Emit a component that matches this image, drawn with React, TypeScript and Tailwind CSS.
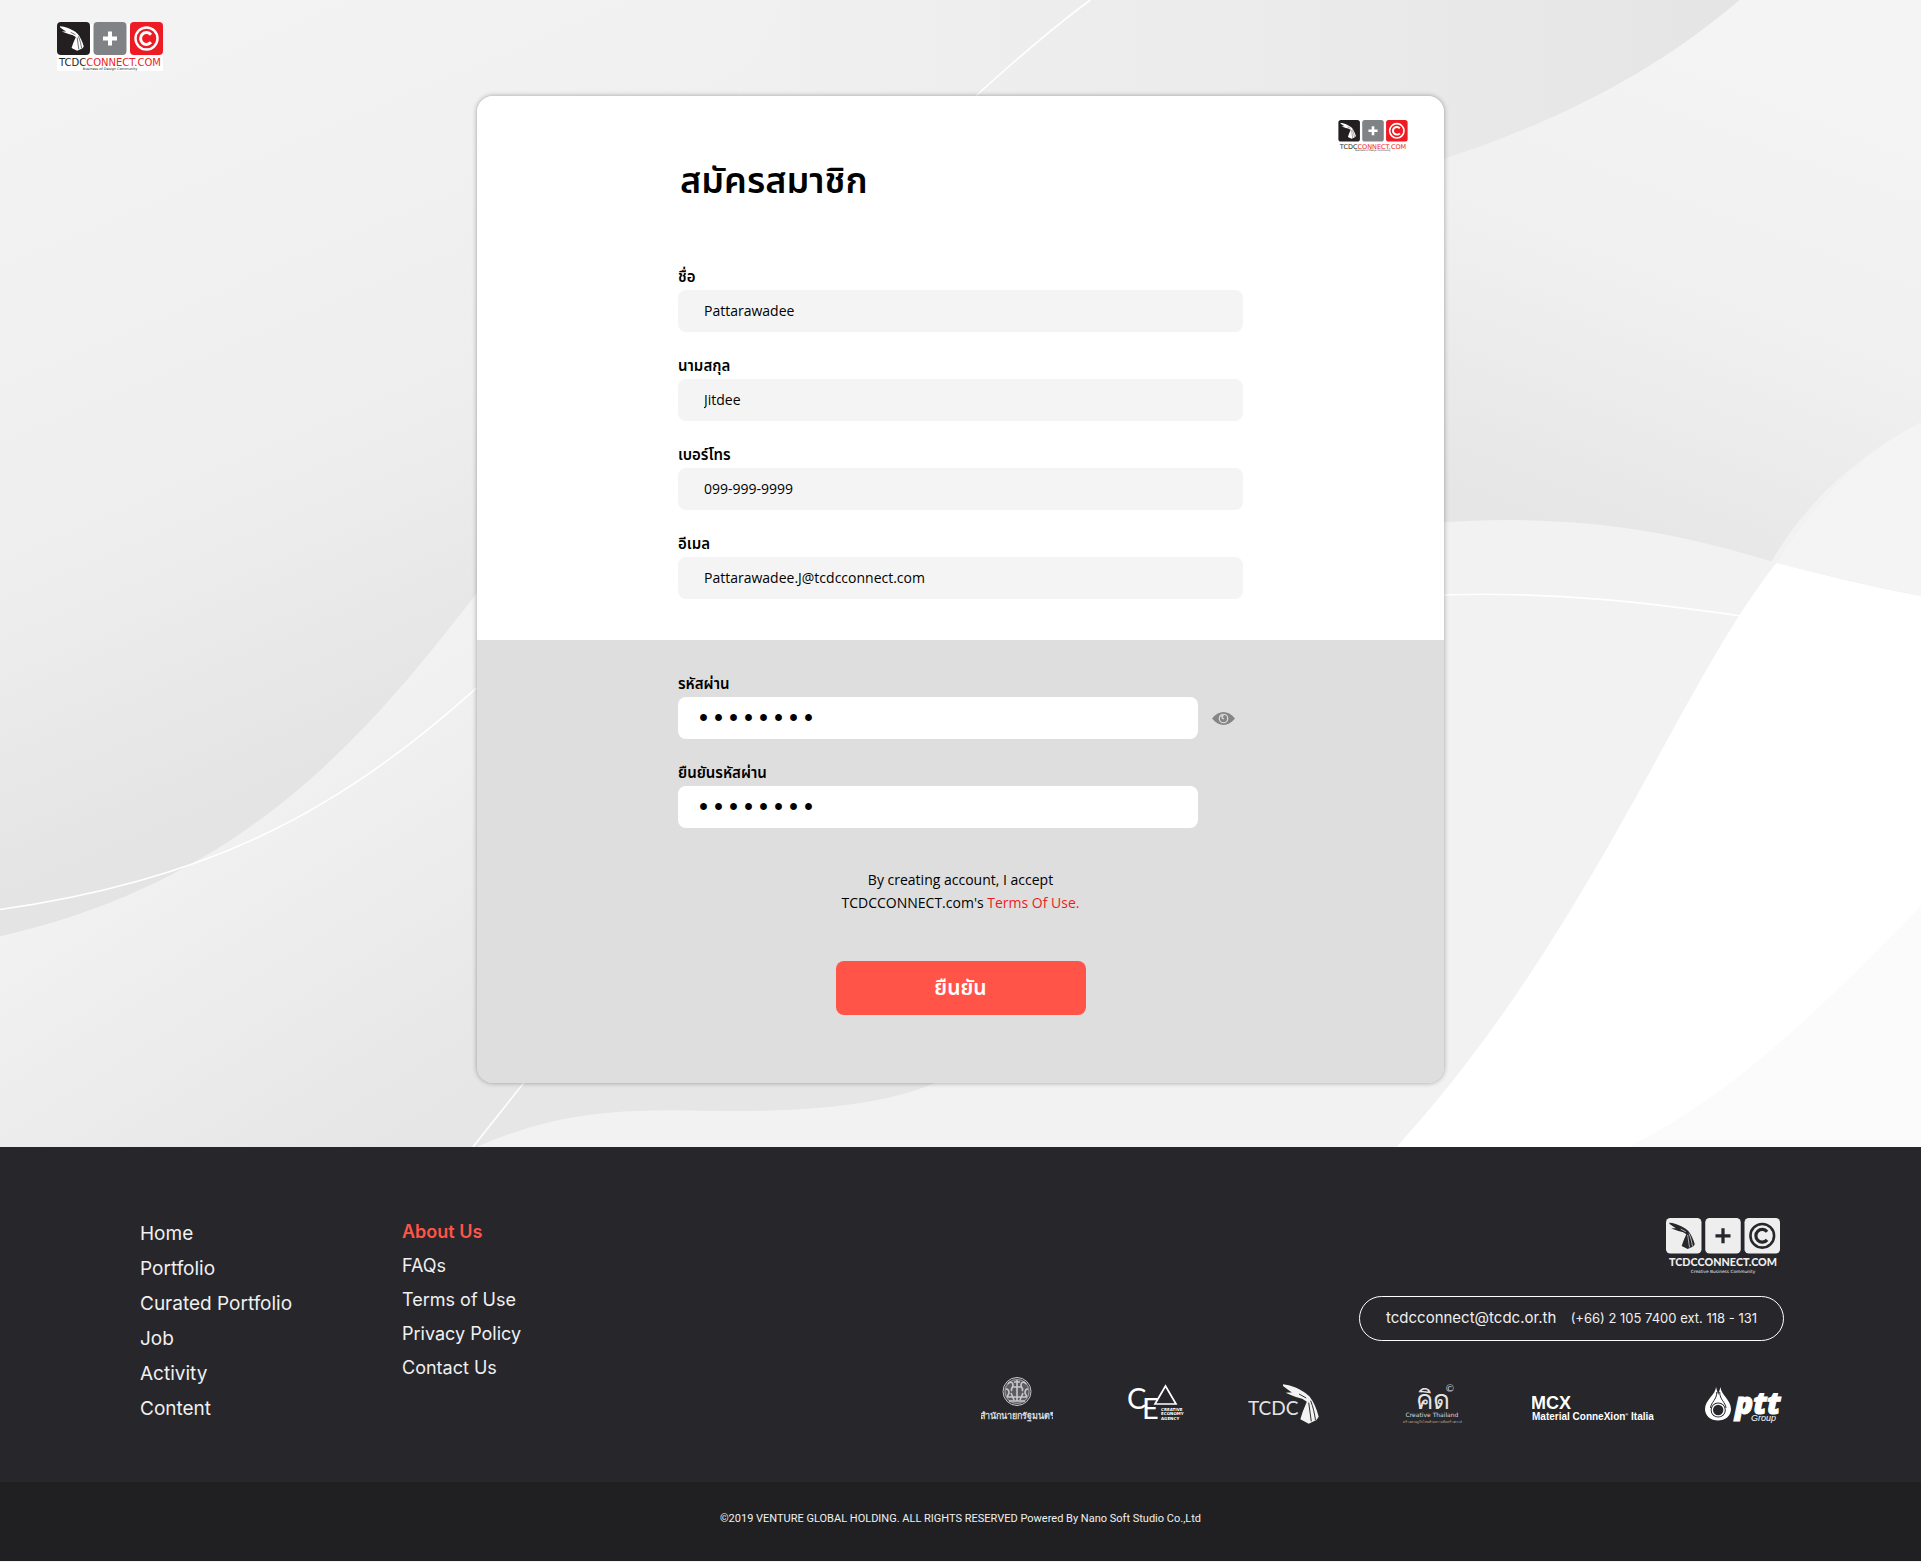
import { useState } from "react";
import type { ReactNode } from "react";

const thai = "font-['Noto_Sans','Noto_Sans_Thai','Kanit',sans-serif]";

function Hand({ x, y, width, height, fill, line }: { x: number; y: number; width: number; height: number; fill: string; line: string }) {
  return (
    <svg x={x} y={y} width={width} height={height} viewBox="0 0 112 120" preserveAspectRatio="none">
      <path
        fill={fill}
        d="M0 1 L18 4 C44 11 68 24 82 37 C96 54 105 76 111 98 L104 108 L80 119 L54 106 L61 84 L74 53 L66 48 C44 36 20 22 0 6 Z M8 26 L30 25 L72 40 L74 47 C50 43 30 35 8 26 Z"
      />
      <path d="M80 56 L88 112 M86 50 C94 70 98 88 101 108 M72 42 L50 30" stroke={line} strokeWidth="3" fill="none" />
    </svg>
  );
}

type LogoColors = { a: string; b: string; c: string; ink: string; text1: string; text2: string };

function BrandLogo({ className, colors, plate, tagline, light }: { className: string; colors: LogoColors; plate?: boolean; tagline: string; light?: boolean }) {
  return (
    <svg className={className} viewBox={light ? "0 0 106 52" : "0 0 106 49"} role="img" aria-label="TCDCCONNECT.COM">
      {plate && <rect x="0" y="2" width="106" height="47" fill="#fff" />}
      <rect x="0" y="0" width="33" height="33" rx="4" fill={colors.a} />
      <rect x="36.5" y="0" width="33" height="33" rx="4" fill={colors.b} />
      <rect x="73" y="0" width="33" height="33" rx="4" fill={colors.c} />
      <Hand x={3} y={4} width={24} height={25} fill={colors.ink} line={colors.a} />
      <path d="M53 9.500v14M46 16.500h14" stroke={colors.ink} strokeWidth={light ? 3 : 4} />
      <circle cx="89.5" cy="16.5" r="11" fill="none" stroke={colors.ink} strokeWidth="2.4" />
      <path d="M94 12.700 A5.900 5.900 0 1 0 94 20.300" fill="none" stroke={colors.ink} strokeWidth="3" />
      <text
        x="53"
        y={light ? 45 : 44}
        textAnchor="middle"
        fontSize="10"
        fontWeight={light ? 900 : 400}
        fontFamily={light ? "Lato, sans-serif" : "DejaVu Sans, sans-serif"}
        fill={colors.text1}
      >
        TCDC<tspan fill={colors.text2}>CONNECT.COM</tspan>
      </text>
      <text x="53" y={light ? 51 : 48} textAnchor="middle" fontSize={light ? 4 : 3.5} fontFamily="DejaVu Sans, sans-serif" fill={colors.text1}>
        {tagline}
      </text>
    </svg>
  );
}

const red: LogoColors = { a: "#231f20", b: "#808285", c: "#ed1c24", ink: "#fff", text1: "#231f20", text2: "#ed1c24" };
const mono: LogoColors = { a: "#eeeeee", b: "#eeeeee", c: "#eeeeee", ink: "#27262b", text1: "#eeeeee", text2: "#eeeeee" };

function Waves() {
  return (
    <svg className="absolute inset-0 -z-10 h-full w-full" viewBox="0 0 1568 937" preserveAspectRatio="none" aria-hidden="true">
      <defs>
        <linearGradient id="left" gradientUnits="userSpaceOnUse" x1="0" y1="100" x2="230" y2="640">
          <stop offset="0" stopColor="#f3f3f3" />
          <stop offset="0.6" stopColor="#eeeeee" />
          <stop offset="1" stopColor="#e4e4e4" />
        </linearGradient>
        <linearGradient id="top" gradientUnits="userSpaceOnUse" x1="620" y1="0" x2="1400" y2="0">
          <stop offset="0" stopColor="#f0f0f0" />
          <stop offset="0.55" stopColor="#ebebeb" />
          <stop offset="1" stopColor="#e5e5e5" />
        </linearGradient>
        <linearGradient id="right" gradientUnits="userSpaceOnUse" x1="1450" y1="50" x2="1300" y2="440">
          <stop offset="0" stopColor="#f4f4f4" />
          <stop offset="0.5" stopColor="#f0f0f0" />
          <stop offset="1" stopColor="#e6e6e6" />
        </linearGradient>
        <linearGradient id="low" gradientUnits="userSpaceOnUse" x1="150" y1="660" x2="320" y2="930">
          <stop offset="0" stopColor="#f2f2f2" />
          <stop offset="1" stopColor="#e6e6e6" />
        </linearGradient>
      </defs>
      <rect width="1568" height="937" fill="#f2f2f2" />
      <path d="M620 0 H1420 C1350 60 1270 100 1178 130 L800 300 L600 100 Z" fill="url(#top)" />
      <path d="M1420 0 H1568 V345 C1500 380 1460 430 1440 470 L1178 500 V130 C1270 100 1350 60 1420 0 Z" fill="url(#right)" />
      <path d="M0 0 H640 L520 250 C470 340 430 440 389 485 C300 600 200 720 0 765 Z" fill="url(#left)" />
      <path d="M0 765 C200 720 300 600 389 485 L800 600 L765 937 H0 Z" fill="url(#low)" />
      <path d="M389 937 C450 910 500 907 550 907 C630 909 710 908 765 884 L1178 800 L1300 937 Z" fill="#f2f2f2" />
      <path d="M1100 435 C1240 415 1340 425 1450 460 L1460 480 L1140 937 H1000 Z" fill="#f2f2f2" />
      <path d="M1568 345 C1515 372 1475 420 1450 460 L1568 487 Z" fill="#f4f4f4" />
      <path d="M1450 460 C1490 470 1530 480 1568 487 V937 H1140 C1300 760 1370 560 1450 460 Z" fill="#ffffff" />
      <path d="M1568 740 C1490 820 1420 890 1330 937 H1568 Z" fill="#fbfbfb" />
      <g fill="none" stroke="#fff" strokeWidth="1.3">
        <path d="M0 743 C160 720 270 670 389 562" />
        <path d="M386 937 L428 884" />
        <path d="M797 78 C830 48 860 22 890 0" />
        <path d="M1178 486 C1270 483 1350 493 1420 503" />
      </g>
    </svg>
  );
}

function TextField({ id, label, value, type = "text" }: { id: string; label: string; value: string; type?: string }) {
  return (
    <div className="flex flex-col gap-1">
      <label htmlFor={id} className={`text-[15px] leading-5 font-semibold text-black ${thai}`}>
        {label}
      </label>
      <input
        id={id}
        type={type}
        defaultValue={value}
        className="h-[42px] w-full rounded-lg bg-[#f4f4f4] px-[26px] pb-0.5 font-['Open_Sans',sans-serif] text-sm font-normal text-black outline-none"
      />
    </div>
  );
}

function PasswordField({ id, label, visible, children }: { id: string; label: string; visible: boolean; children?: ReactNode }) {
  return (
    <div className="flex flex-col gap-1">
      <label htmlFor={id} className={`text-[15px] leading-5 font-semibold text-black ${thai}`}>
        {label}
      </label>
      <div className="flex items-center gap-[14px]">
        <input
          id={id}
          type={visible ? "text" : "password"}
          defaultValue="password"
          className="h-[42px] w-[520px] rounded-lg bg-white px-[18px] pt-0.5 font-['Liberation_Mono',monospace] text-[25px] text-black outline-none"
        />
        {children}
      </div>
    </div>
  );
}

function Eye() {
  return (
    <svg viewBox="0 0 46 26" className="h-[13px] w-[23px]" aria-hidden="true">
      <path d="M0 13 C8 4 15 0 23 0 C31 0 38 4 46 13 C38 22 31 26 23 26 C15 26 8 22 0 13 Z" fill="#858585" />
      <circle cx="23" cy="13" r="8.5" fill="none" stroke="#dedede" strokeWidth="2.4" />
      <path d="M17 9 L22 7 L20 12 L24 14" fill="none" stroke="#dedede" strokeWidth="2.2" />
    </svg>
  );
}

function Partners() {
  return (
    <div className="mt-[35px] flex items-start">
      <svg className="h-12 w-[72px]" viewBox="981 1375 72 48" role="img" aria-label="สำนักนายกรัฐมนตรี">
        <circle cx="1017" cy="1390.5" r="13" fill="#5c5c60" />
        <g fill="none" stroke="#c9c9cb">
          <circle cx="1017" cy="1390.5" r="14" strokeWidth="1" />
          <circle cx="1017" cy="1390.5" r="12" strokeWidth="0.6" />
          <path d="M1008 1383c2-3 5-2 5 1s-3 4-1 6M1026 1383c-2-3-5-2-5 1s3 4 1 6M1017 1379v21M1014 1381h6M1013 1386h8M1006 1388c2 0 3 1 3 4l-2 4M1028 1388c-2 0-3 1-3 4l2 4M1007 1396h20M1009 1400h16M1011 1392l3 7M1023 1392l-3 7" strokeWidth="1.6" />
        </g>
        <text x="1017" y="1418" textAnchor="middle" fontSize="9" fontWeight="600" fill="#d8d8da" fontFamily="Noto Sans, sans-serif">
          สำนักนายกรัฐมนตรี
        </text>
      </svg>
      <svg className="ml-[74px] h-12 w-[57px]" viewBox="1127 1375 57 48" role="img" aria-label="Creative Economy Agency">
        <g fill="#fff" fontFamily="Lato, sans-serif">
          <text x="1127" y="1408" fontSize="29" fontWeight="400">C</text>
          <text x="1142" y="1418" fontSize="29" fontWeight="400">E</text>
        </g>
        <path d="M1165.5 1385 L1155 1403 H1176 Z" fill="#27262b" stroke="#fff" strokeWidth="1.7" />
        <g fill="#fff" fontFamily="DejaVu Sans, sans-serif" fontWeight="700" fontSize="4">
          <text x="1161" y="1410.4">CREATIVE</text>
          <text x="1161" y="1414.4">ECONOMY</text>
          <text x="1161" y="1418.6">AGENCY</text>
        </g>
      </svg>
      <svg className="ml-16 h-12 w-[72px]" viewBox="1248 1375 72 48" role="img" aria-label="TCDC">
        <text x="1248" y="1414" fontSize="19" fill="#e4e4e4" fontFamily="Lato, sans-serif">TCDC</text>
        <Hand x={1283} y={1383} width={36} height={40} fill="#f2f2f2" line="#27262b" />
      </svg>
      <svg className="ml-[85px] h-12 w-[54px] overflow-visible" viewBox="1405 1375 54 48" role="img" aria-label="Creative Thailand">
        <text x="1433" y="1408" textAnchor="middle" fontSize="26" fontWeight="500" fill="#e4e4e4" fontFamily="Noto Sans, sans-serif">คิด</text>
        <text x="1450" y="1391" textAnchor="middle" fontSize="10" fill="#cfcfcf" fontFamily="Lato, sans-serif">©</text>
        <text x="1432" y="1416" textAnchor="middle" fontSize="6" fill="#dcdcdc" fontFamily="DejaVu Sans, sans-serif">Creative Thailand</text>
        <text x="1432" y="1422" textAnchor="middle" fontSize="3" fill="#b5b5b5" fontFamily="Noto Sans, sans-serif">สร้างเศรษฐกิจไทยด้วยความคิดสร้างสรรค์</text>
      </svg>
      <svg className="ml-[73px] h-12 w-[122px]" viewBox="1532 1375 122 48" role="img" aria-label="Material ConneXion Italia">
        <g fill="#fff" fontFamily="Liberation Sans, sans-serif" fontWeight="700">
          <text x="1531" y="1408" fontSize="18">MCX</text>
          <text x="1532" y="1419" fontSize="10">
            Material ConneXion<tspan fontSize="4" dy="-4">®</tspan><tspan dy="4"> Italia</tspan>
          </text>
        </g>
      </svg>
      <svg className="ml-[51px] h-12 w-[79px] overflow-visible" viewBox="1705 1375 79 48" role="img" aria-label="ptt Group">
        <path d="M1716 1386 C1716 1393 1705 1399 1705 1408 C1705 1415 1711 1419.5 1718 1419.5 C1725 1419.5 1731 1415 1731 1408 C1731 1399 1720.500 1393 1720.500 1386 L1718.200 1394 Z" fill="#fff" />
        <path d="M1716.800 1391 C1716.800 1399 1711 1401 1710.500 1407 M1719.700 1391 C1719.700 1399 1725.500 1401 1726 1407" fill="none" stroke="#27262b" strokeWidth="1" />
        <circle cx="1718.200" cy="1409" r="7.600" fill="#27262b" />
        <circle cx="1718.200" cy="1409" r="6.600" fill="#fff" />
        <circle cx="1718.200" cy="1409" r="5.200" fill="#27262b" />
        <text x="1735" y="1413" fontSize="30" fontWeight="800" fontStyle="italic" fill="#fff" stroke="#fff" strokeWidth="1" fontFamily="Open Sans, sans-serif">ptt</text>
        <text x="1751" y="1419.500" fontSize="9" fontStyle="italic" fill="#fff" stroke="#27262b" strokeWidth="1.500" paintOrder="stroke" fontFamily="Liberation Sans, sans-serif">Group</text>
      </svg>
    </div>
  );
}

const primaryLinks = ["Home", "Portfolio", "Curated Portfolio", "Job", "Activity", "Content"];
const secondaryLinks = ["About Us", "FAQs", "Terms of Use", "Privacy Policy", "Contact Us"];

export default function App() {
  const [visible, setVisible] = useState(false);
  return (
    <div className="flex min-h-screen flex-col bg-[#f4f4f4]">
      <main className="relative isolate flex flex-col pb-16">
        <Waves />
        <header className="flex pt-[22px] pl-[57px]">
          <a href="#home" aria-label="TCDCCONNECT.COM">
            <BrandLogo className="h-[49px] w-[106px]" colors={red} plate tagline="Business of Design Community" />
          </a>
        </header>
        <form className="mx-auto mt-[25px] w-full max-w-[967px] overflow-hidden rounded-2xl shadow-[0_0_5px_rgba(0,0,0,0.35)]" onSubmit={(e) => e.preventDefault()}>
          <div className="bg-white pb-[41px]">
            <div className="flex justify-end pt-6 pr-9">
              <BrandLogo className="h-8 w-[70px]" colors={red} tagline="Business of Design Community" />
            </div>
            <div className="mx-auto max-w-[565px]">
              <h1 className={`pt-0.5 pl-0.5 text-[36px] leading-[52px] font-semibold text-black ${thai}`}>สมัครสมาชิก</h1>
              <div className="mt-[60px] flex flex-col gap-[23px]">
                <TextField id="first" label="ชื่อ" value="Pattarawadee" />
                <TextField id="last" label="นามสกุล" value="Jitdee" />
                <TextField id="phone" label="เบอร์โทร" value="099-999-9999" type="tel" />
                <TextField id="email" label="อีเมล" value="Pattarawadee.J@tcdcconnect.com" type="email" />
              </div>
            </div>
          </div>
          <div className="bg-[#dedede] pt-[33px] pb-[68px]">
            <div className="mx-auto flex max-w-[565px] flex-col gap-[23px]">
              <PasswordField id="password" label="รหัสผ่าน" visible={visible}>
                <button type="button" aria-label="Show password" onClick={() => setVisible(!visible)}>
                  <Eye />
                </button>
              </PasswordField>
              <PasswordField id="confirm" label="ยืนยันรหัสผ่าน" visible={visible} />
            </div>
            <p className="mt-10 text-center font-['Open_Sans',sans-serif] text-sm leading-[23px] text-black">
              By creating account, I accept
              <br />
              TCDCCONNECT.com&apos;s <a href="#terms" className="text-[#ed1c24]">Terms Of Use.</a>
            </p>
            <button type="submit" className={`mx-auto mt-[47px] block h-[54px] w-[250px] rounded-lg bg-[#ff5447] text-[21px] font-semibold text-white ${thai}`}>
              ยืนยัน
            </button>
          </div>
        </form>
      </main>

      <footer className="bg-[#27262b] font-['Inter',sans-serif] text-[#f0f0f0]">
        <div className="flex justify-between pt-[68px] pr-[137px] pb-14 pl-[140px]">
          <nav className="flex">
            <ul className="w-[262px] pt-px text-[19px] leading-[35px]">
              {primaryLinks.map((t) => (
                <li key={t}><a href="#link">{t}</a></li>
              ))}
            </ul>
            <ul className="text-lg leading-[34px]">
              {secondaryLinks.map((t, i) => (
                <li key={t}><a href="#link" className={i === 0 ? "font-semibold text-[#ff5447]" : ""}>{t}</a></li>
              ))}
            </ul>
          </nav>
          <div className="flex flex-col items-end pt-[3px]">
            <BrandLogo className="mr-1 h-14 w-[114px]" colors={mono} light tagline="Creative Business Community" />
            <address className="mt-[22px] flex h-[45px] w-[425px] items-center justify-between rounded-full border border-white px-[26px] not-italic">
              <a href="mailto:tcdcconnect@tcdc.or.th" className="text-[15px]">tcdcconnect@tcdc.or.th</a>
              <span className="text-[13px]">(+66) 2 105 7400 ext. 118 - 131</span>
            </address>
            <Partners />
          </div>
        </div>
        <div className="bg-[#202022] pt-7 pb-[34px] text-center font-['Roboto',sans-serif] text-[11px] leading-[17px]">
          ©2019 VENTURE GLOBAL HOLDING. ALL RIGHTS RESERVED Powered By Nano Soft Studio Co.,Ltd
        </div>
      </footer>
    </div>
  );
}
